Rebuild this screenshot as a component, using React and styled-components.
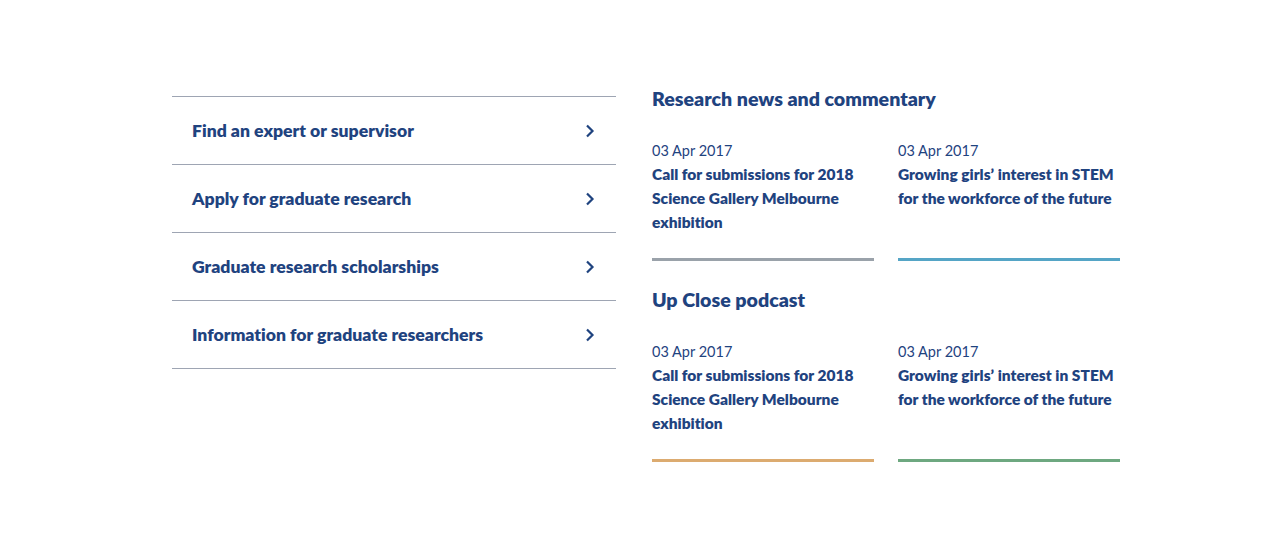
import styled, { createGlobalStyle } from "styled-components";

const Global = createGlobalStyle`
  body {
    margin: 0;
    background: #fff;
    font-family: "Lato", "Open Sans", sans-serif;
    font-variant-ligatures: none;
    color: #1f437f;
  }
`;

const Page = styled.div`
  display: flex;
  align-items: flex-start;
  gap: 36px;
  padding: 87px 0 0 172px;
`;

const LinkList = styled.ul`
  list-style: none;
  margin: 9px 0 0;
  padding: 0;
  width: 444px;
  border-bottom: 1px solid #9ea5b3;
`;

const LinkItem = styled.li`
  display: flex;
  align-items: center;
  justify-content: space-between;
  height: 67px;
  padding: 0 20px;
  border-top: 1px solid #9ea5b3;
  font-size: 17.6px;
  font-weight: 800;
`;

const Chevron = () => (
  <svg width="12" height="14" viewBox="0 0 12 14">
    <polyline points="3,1.5 8.5,7 3,12.5" fill="none" stroke="#1f437f" strokeWidth="2.2" />
  </svg>
);

const Side = styled.div`
  width: 468px;
`;

const Heading = styled.h2`
  margin: 0;
  font-size: 19.6px;
  line-height: 24px;
  font-weight: 800;
`;

const Cards = styled.div`
  display: grid;
  grid-template-columns: 222px 222px;
  gap: 24px;
  margin: 28px 0 27px;
`;

const Card = styled.div`
  padding-bottom: 24px;
  border-bottom: 3px solid ${(p) => p.$bar};
`;

const Date = styled.div`
  font-size: 14.5px;
  line-height: 24px;
`;

const Title = styled.div`
  font-size: 15.5px;
  line-height: 24px;
  font-weight: 800;
  margin-top: -1px;
`;

const links = [
  "Find an expert or supervisor",
  "Apply for graduate research",
  "Graduate research scholarships",
  "Information for graduate researchers",
];

const sections = [
  { title: "Research news and commentary", bars: ["#9aa2aa", "#55a5c6"] },
  { title: "Up Close podcast", bars: ["#dcab70", "#6ea880"] },
];

const posts = [
  "Call for submissions for 2018 Science Gallery Melbourne exhibition",
  "Growing girls’ interest in STEM for the workforce of the future",
];

export default function App() {
  return (
    <>
      <Global />
      <Page>
        <LinkList>
          {links.map((l) => (
            <LinkItem key={l}>
              {l}
              <Chevron />
            </LinkItem>
          ))}
        </LinkList>
        <Side>
          {sections.map((s) => (
            <div key={s.title}>
              <Heading>{s.title}</Heading>
              <Cards>
                {posts.map((p, i) => (
                  <Card key={p} $bar={s.bars[i]}>
                    <Date>03 Apr 2017</Date>
                    <Title>{p}</Title>
                  </Card>
                ))}
              </Cards>
            </div>
          ))}
        </Side>
      </Page>
    </>
  );
}
